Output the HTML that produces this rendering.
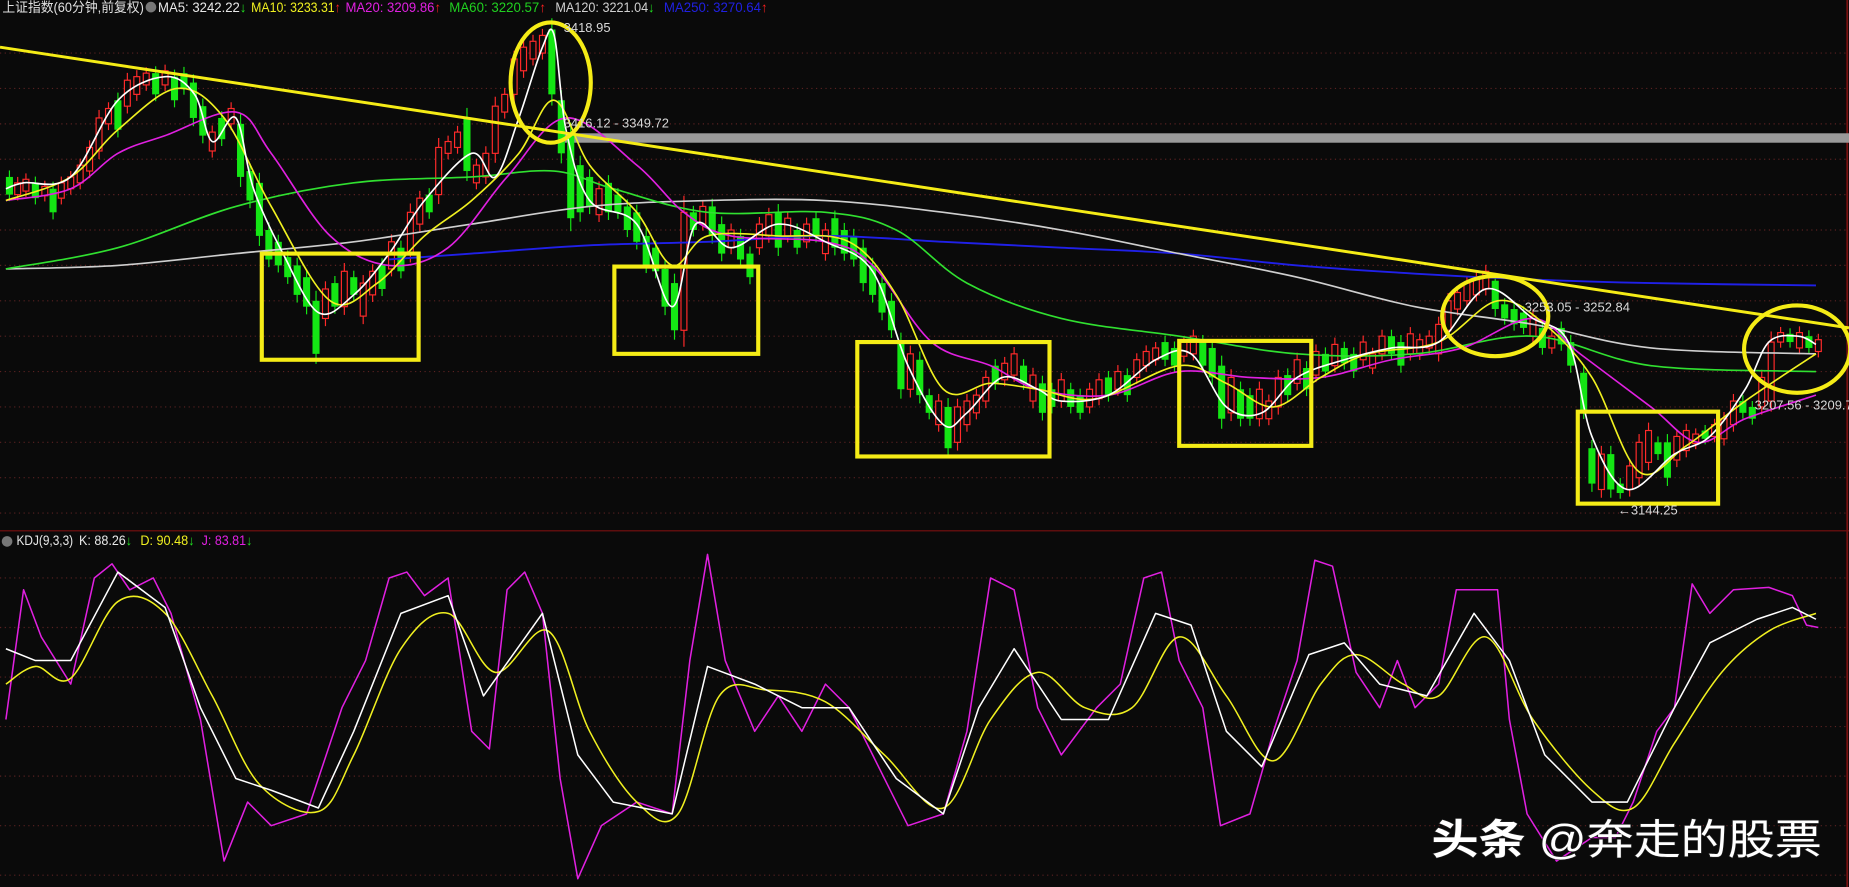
<!DOCTYPE html>
<html><head><meta charset="utf-8">
<style>
html,body{margin:0;padding:0;background:#0a0a0a;overflow:hidden}
svg{display:block}
text{font-family:"Liberation Sans","Noto Sans CJK SC",sans-serif}
</style></head>
<body>
<svg id="s" width="1849" height="887" viewBox="0 0 1568 752" preserveAspectRatio="none" xmlns="http://www.w3.org/2000/svg">
<rect width="1568" height="752" fill="#0a0a0a"/>
<g id="grid" stroke="#5a2222" stroke-width="1" stroke-dasharray="1,3"></g>
<line x1="0" y1="450" x2="1568" y2="450" stroke="#7a1010" stroke-width="1"/>
<line x1="1566.5" y1="0" x2="1566.5" y2="752" stroke="#7a1010" stroke-width="1.5"/>
<rect x="475" y="113" width="1093" height="8" fill="#9a9a9a"/>
<g id="candles"></g>
<g id="lines" fill="none" stroke-width="1.4" stroke-linejoin="round"></g>
<line x1="0" y1="40" x2="1568" y2="278" stroke="#f5ec16" stroke-width="2.5"/>
<g fill="none" stroke="#f5ec16" stroke-width="3.5">
<rect x="222" y="215" width="133" height="90"/>
<rect x="521" y="226" width="122" height="74"/>
<rect x="727" y="290" width="163" height="97"/>
<rect x="1000" y="289" width="112" height="89"/>
<rect x="1338" y="349" width="119" height="78"/>
<ellipse cx="467" cy="70" rx="34" ry="51"/>
<ellipse cx="1268" cy="268" rx="45" ry="34"/>
<ellipse cx="1524" cy="296" rx="45" ry="37"/>
</g>
<g fill="#d8d8d8" font-size="11">
<text x="478" y="27">3418.95</text>
<text x="478" y="108">3416.12 - 3349.72</text>
<text x="1293" y="264">3253.05 - 3252.84</text>
<text x="1488" y="347">3207.56 - 3209.7</text>
<text x="1372" y="436">←3144.25</text>
</g>
<g font-size="11.5" lengthAdjust="spacingAndGlyphs">
<text x="2" y="10" fill="#e0e0e0" textLength="120" lengthAdjust="spacingAndGlyphs">上证指数(60分钟,前复权)</text>
<circle cx="128" cy="6" r="4.5" fill="#777"/>
<text x="134" y="10" fill="#e8e8e8" textLength="75" lengthAdjust="spacingAndGlyphs">MA5: 3242.22<tspan fill="#20e020">↓</tspan></text>
<text x="213" y="10" fill="#f0f020" textLength="76" lengthAdjust="spacingAndGlyphs">MA10: 3233.31<tspan fill="#ff2020">↑</tspan></text>
<text x="293" y="10" fill="#e020e0" textLength="81" lengthAdjust="spacingAndGlyphs">MA20: 3209.86<tspan fill="#ff2020">↑</tspan></text>
<text x="381" y="10" fill="#20d020" textLength="82" lengthAdjust="spacingAndGlyphs">MA60: 3220.57<tspan fill="#ff2020">↑</tspan></text>
<text x="471" y="10" fill="#d0d0d0" textLength="84" lengthAdjust="spacingAndGlyphs">MA120: 3221.04<tspan fill="#20e020">↓</tspan></text>
<text x="563" y="10" fill="#2020e0" textLength="88" lengthAdjust="spacingAndGlyphs">MA250: 3270.64<tspan fill="#ff2020">↑</tspan></text>
<circle cx="6" cy="459" r="4.5" fill="#777"/>
<text x="14" y="462" fill="#e8e8e8" textLength="48" lengthAdjust="spacingAndGlyphs">KDJ(9,3,3)</text>
<text x="67" y="462" fill="#e8e8e8" textLength="45" lengthAdjust="spacingAndGlyphs">K: 88.26<tspan fill="#20e020">↓</tspan></text>
<text x="119" y="462" fill="#f0f020" textLength="46" lengthAdjust="spacingAndGlyphs">D: 90.48<tspan fill="#20e020">↓</tspan></text>
<text x="171" y="462" fill="#e020e0" textLength="43" lengthAdjust="spacingAndGlyphs">J: 83.81<tspan fill="#20e020">↓</tspan></text>
</g>
<text x="1214" y="724" font-size="35" fill="#fff" textLength="331" lengthAdjust="spacingAndGlyphs" style="paint-order:stroke" stroke="#222" stroke-width="1"><tspan font-weight="bold">头条</tspan> @奔走的股票</text>
</svg>
<script>
var NS="http://www.w3.org/2000/svg";
function el(p,n,a){var e=document.createElementNS(NS,n);for(var k in a)e.setAttribute(k,a[k]);p.appendChild(e);return e;}
var g=document.getElementById('grid');
for(var y=45;y<445;y+=30)el(g,'line',{x1:0,y1:y,x2:1568,y2:y});
for(var y=490;y<752;y+=42)el(g,'line',{x1:0,y1:y,x2:1568,y2:y});
var C=[[8,150,165,0],[15,155,165,1],[22,152,162,1],[30,155,168,0],[38,158,166,1],[45,160,180,0],[52,155,168,1],[60,150,160,1],[68,140,155,1],[76,125,145,1],[84,100,128,1],[92,92,105,1],[100,85,110,0],[108,68,90,1],[116,65,80,1],[124,62,72,1],[132,62,80,0],[140,60,72,1],[148,65,85,0],[156,62,75,0],[164,70,100,0],[172,90,115,0],[180,112,128,1],[188,100,118,0],[196,92,105,1],[204,105,150,0],[212,145,170,0],[220,155,200,0],[228,195,220,0],[236,205,225,0],[244,218,235,0],[252,225,250,0],[260,235,260,0],[268,255,300,0],[276,245,270,1],[284,240,260,0],[292,230,260,1],[300,235,250,0],[308,240,268,1],[316,230,250,1],[324,225,245,0],[332,205,228,1],[340,210,230,0],[348,180,215,1],[356,168,190,1],[364,165,180,0],[372,125,165,1],[380,120,130,1],[388,112,125,1],[396,100,145,0],[404,140,155,1],[412,130,150,1],[420,90,130,1],[428,80,95,1],[436,50,80,1],[444,40,60,1],[452,35,50,1],[460,30,45,1],[468,25,80,0],[476,85,130,0],[484,115,185,0],[492,140,180,0],[500,150,175,0],[508,160,182,1],[516,155,180,0],[524,165,180,0],[532,175,195,0],[540,180,205,0],[548,200,225,0],[556,210,230,0],[564,228,260,0],[572,240,280,0],[580,180,280,1],[588,180,195,0],[596,175,190,1],[604,175,200,0],[612,190,215,0],[620,195,210,1],[628,200,220,0],[636,215,235,0],[644,190,210,1],[652,182,200,1],[660,180,210,0],[668,185,200,1],[676,195,210,0],[684,190,205,1],[692,185,200,0],[700,195,215,1],[708,185,210,0],[716,195,215,0],[724,200,220,0],[732,210,240,0],[740,225,250,0],[748,240,265,0],[756,255,280,0],[764,290,330,0],[772,300,330,1],[780,305,335,0],[788,335,350,0],[796,340,360,1],[804,345,380,0],[812,345,375,1],[820,340,360,1],[828,335,350,1],[836,320,340,1],[844,310,325,0],[852,308,322,1],[860,300,318,1],[868,310,325,0],[876,318,340,1],[884,325,350,0],[892,330,345,0],[900,322,340,1],[908,330,345,0],[916,335,350,0],[924,330,345,1],[932,322,338,1],[940,320,335,0],[948,315,330,1],[956,318,335,0],[964,305,320,1],[972,298,310,1],[980,295,305,1],[988,290,305,0],[996,295,310,0],[1004,290,302,1],[1012,285,300,1],[1020,290,310,0],[1028,295,320,0],[1036,310,355,0],[1044,320,350,1],[1052,330,355,0],[1060,335,355,0],[1068,330,355,1],[1076,340,355,1],[1084,320,345,1],[1092,318,335,0],[1100,305,325,1],[1108,312,330,0],[1116,298,318,1],[1124,300,315,0],[1132,292,310,1],[1140,295,308,0],[1148,300,315,0],[1156,290,305,1],[1164,300,312,1],[1172,285,300,1],[1180,285,300,0],[1188,290,310,0],[1196,283,300,1],[1204,288,300,1],[1212,285,295,1],[1220,275,300,1],[1228,255,280,1],[1236,248,262,1],[1244,240,255,1],[1252,235,250,1],[1260,230,245,1],[1268,238,262,0],[1276,258,270,0],[1284,262,275,0],[1292,265,278,0],[1300,268,285,1],[1308,278,295,0],[1316,285,295,1],[1324,278,292,0],[1332,290,310,0],[1343,316,348,0],[1350,380,410,0],[1358,385,415,1],[1366,385,415,0],[1374,410,418,0],[1382,395,415,1],[1390,375,405,1],[1398,365,392,1],[1406,375,385,0],[1414,375,405,0],[1422,370,390,1],[1430,365,382,1],[1438,368,376,1],[1446,365,372,0],[1454,360,370,1],[1462,355,372,1],[1470,340,360,1],[1478,340,350,0],[1486,345,355,0],[1494,320,345,1],[1502,290,340,1],[1510,282,290,1],[1518,283,290,0],[1526,282,295,1],[1534,285,295,0],[1542,288,298,1]];
var cg=document.getElementById('candles');
C.forEach(function(c){var col=c[3]?'#ff2a2a':'#14e614';var h=c[2]-c[1];
el(cg,'line',{x1:c[0],y1:c[1]-4-h*0.1,x2:c[0],y2:c[2]+4+h*0.1,stroke:col,'stroke-width':1});
if(c[3])el(cg,'rect',{x:c[0]-2.5,y:c[1],width:5,height:Math.max(1,h),fill:'#0a0a0a',stroke:col,'stroke-width':1});
else el(cg,'rect',{x:c[0]-3,y:c[1],width:6,height:Math.max(1,h),fill:col});});
function smooth(a){var p=[];for(var i=0;i<a.length;i+=2)p.push([a[i],a[i+1]]);
var d='M'+p[0][0]+','+p[0][1];
for(var i=0;i<p.length-1;i++){var p0=p[i-1]||p[i],p1=p[i],p2=p[i+1],p3=p[i+2]||p2;
d+=' C'+(p1[0]+(p2[0]-p0[0])/6)+','+(p1[1]+(p2[1]-p0[1])/6)+' '+(p2[0]-(p3[0]-p1[0])/6)+','+(p2[1]-(p3[1]-p1[1])/6)+' '+p2[0]+','+p2[1];}
return d;}
function P(a){var s='';for(var i=0;i<a.length;i+=2)s+=a[i]+','+a[i+1]+' ';return s;}
var L=document.getElementById('lines');
function sl(a,c,w){el(L,'path',{d:smooth(a),stroke:c,'stroke-width':w||1.4});}
function pl(a,c,w){el(L,'polyline',{points:P(a),stroke:c,'stroke-width':w||1.4});}
sl([330,220,400,215,500,208,600,205,700,200,800,205,900,210,1000,215,1100,225,1200,232,1300,237,1400,240,1540,242],'#2020e8',1.6);
sl([5,228,100,225,200,215,300,205,400,190,500,175,600,170,700,170,800,180,900,195,1000,215,1100,235,1200,260,1300,275,1400,295,1540,300],'#cfcfcf');
sl([5,228,100,210,200,175,300,155,400,150,470,145,520,160,600,180,700,180,760,195,820,240,900,270,1000,285,1100,300,1200,300,1300,285,1400,310,1540,315],'#30e030');
sl([5,170,60,160,100,130,140,115,200,95,230,130,280,200,330,225,380,210,430,150,480,100,540,140,580,180,620,200,700,205,740,225,790,290,840,310,880,330,940,335,1000,315,1060,320,1120,320,1180,305,1240,295,1300,270,1340,300,1400,345,1440,375,1480,355,1540,335],'#e020e0');
sl([5,170,60,150,100,110,150,75,190,100,230,175,280,255,320,240,360,200,400,170,440,130,470,85,500,140,540,180,570,225,600,200,660,200,720,205,760,250,800,330,840,325,880,330,930,338,1000,310,1040,325,1080,345,1120,320,1160,300,1220,290,1270,255,1310,275,1350,320,1390,400,1430,378,1480,340,1540,300],'#f0f020');
sl([5,160,20,155,60,150,100,85,140,65,165,80,180,120,200,100,215,160,240,215,270,265,300,250,330,215,360,170,400,130,420,150,440,100,460,40,470,30,480,110,500,170,540,190,570,260,590,190,620,210,660,190,700,205,740,230,770,310,800,360,820,350,850,320,880,330,900,340,940,335,980,305,1010,300,1040,345,1070,350,1100,320,1140,305,1180,295,1220,290,1260,245,1300,270,1330,290,1350,370,1380,415,1420,385,1450,370,1480,330,1500,290,1525,285,1540,292],'#ffffff');
pl([5,610,20,500,35,540,60,580,80,490,95,478,110,500,130,490,145,520,170,610,190,730,210,680,230,700,260,690,290,600,310,560,330,490,345,485,360,505,380,490,400,620,415,635,430,500,445,485,460,520,475,660,490,745,510,700,540,680,570,690,585,560,600,470,615,560,640,620,660,590,680,620,700,580,720,600,740,640,770,700,800,690,820,620,840,490,860,500,880,600,900,640,930,600,950,580,970,490,985,485,1000,560,1020,600,1035,700,1060,690,1080,620,1100,560,1115,475,1130,480,1150,570,1170,600,1185,560,1200,600,1220,580,1235,500,1250,500,1270,500,1280,610,1295,690,1320,730,1350,710,1370,710,1385,680,1405,620,1420,600,1435,495,1450,520,1470,500,1500,498,1520,505,1532,530,1542,532],'#e020e0',1.3);
sl([5,580,30,565,60,575,100,510,140,520,180,590,220,665,270,688,300,640,340,550,380,520,420,570,465,535,500,620,540,680,575,690,610,590,650,585,700,595,750,640,800,685,840,610,880,570,920,600,960,600,1000,540,1040,590,1080,645,1120,580,1150,555,1190,580,1220,590,1260,540,1300,610,1350,670,1385,685,1420,630,1460,570,1500,535,1540,520],'#f0f020',1.3);
pl([5,550,30,560,60,560,100,485,140,515,170,600,200,660,230,670,270,685,300,620,340,520,380,505,410,590,460,520,490,640,520,680,570,690,600,565,640,580,680,600,720,600,760,660,800,690,830,600,860,550,900,610,940,610,980,520,1010,530,1040,620,1070,650,1110,555,1140,545,1170,580,1210,590,1250,520,1280,560,1310,640,1350,680,1380,680,1420,600,1450,545,1490,525,1520,515,1540,525],'#ffffff',1.3);
</script>
</body></html>
